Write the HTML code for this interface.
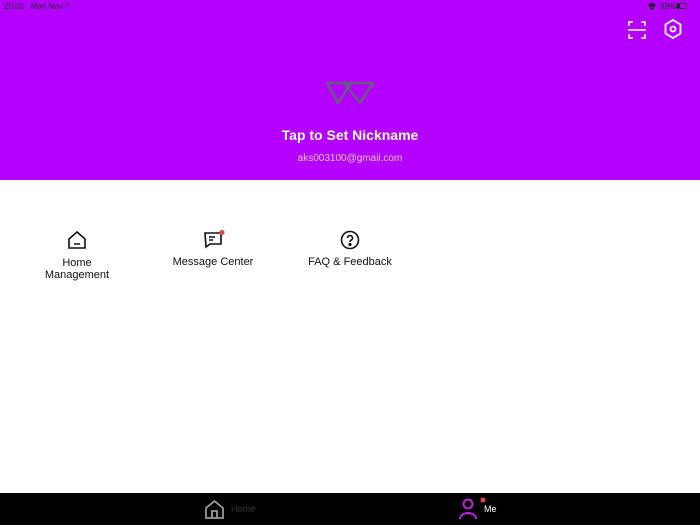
<!DOCTYPE html>
<html><head><style>
*{margin:0;padding:0;box-sizing:border-box}
body{width:700px;height:525px;background:#fff;font-family:"Liberation Sans",sans-serif;position:relative;overflow:hidden}
.hdr{position:absolute;left:0;top:0;width:700px;height:180px;background:#b400fe}
.t{position:absolute;color:#fff}
.item{position:absolute;text-align:center;font-size:11px;color:#111;line-height:12px}
.bar{position:absolute;left:0;top:493px;width:700px;height:32px;background:#000}
</style></head><body>
<div class="hdr">
<div class="t" style="left:4px;top:2px;font-size:8px;color:#222">20:01&nbsp;&nbsp; Mon Nov 7</div>
<div class="t" style="left:660px;top:2px;font-size:8px;color:#222">38%</div>
<div style="position:absolute;left:676px;top:3px;width:11px;height:6px;border:1px solid #333;border-radius:2px"><div style="width:3px;height:4px;background:#222"></div></div>
<svg style="position:absolute;left:647px;top:3px" width="10" height="7" viewBox="0 0 10 7"><path d="M1 2.5Q5 -1 9 2.5M2.5 4Q5 2 7.5 4M5 6.5l1.2-1.3h-2.4z" stroke="#222" fill="#222" stroke-width="1.2"/></svg>
<svg style="position:absolute;left:628px;top:21px" width="18" height="18" viewBox="0 0 18 18" fill="none" stroke="#fff" stroke-width="1.6"><path d="M1 5V1h4M13 1h4v4M17 13v4h-4M5 17H1v-4M0 9h18"/></svg>
<svg style="position:absolute;left:664px;top:19px" width="18" height="20" viewBox="0 0 18 20" fill="none" stroke="#fff" stroke-width="1.8"><path d="M9 1l7.5 4.5v9L9 19 1.5 14.5v-9z"/><circle cx="9" cy="10" r="2.5"/></svg>
<svg style="position:absolute;left:324px;top:80px" width="52" height="26" viewBox="0 0 52 26" fill="none" stroke="#6a5a80" stroke-width="2.6" stroke-linejoin="round"><path d="M3 3h24L14 23z"/><path d="M20 3h29L36 23z"/></svg>
<div class="t" style="left:0;width:700px;text-align:center;top:127px;font-size:14px;font-weight:bold">Tap to Set Nickname</div>
<div class="t" style="left:0;width:700px;text-align:center;top:153px;font-size:10px;color:#e6c0ff">aks003100@gmail.com</div>
</div>
<svg style="position:absolute;left:67px;top:231px" width="20" height="18" viewBox="0 0 20 18" fill="none" stroke="#111" stroke-width="1.6"><path d="M2 8L10 1l8 7v9H2z M7 13h6"/></svg>
<div class="item" style="left:37px;width:80px;top:257px">Home<br>Management</div>
<svg style="position:absolute;left:203px;top:229px" width="24" height="20" viewBox="0 0 24 20" fill="none" stroke="#111" stroke-width="1.6"><path d="M2 4h16v11H7l-4 3z M6 8h6M6 11h4"/><circle cx="19" cy="3.5" r="2.5" fill="#f24040" stroke="none"/></svg>
<div class="item" style="left:163px;width:100px;top:256px">Message Center</div>
<svg style="position:absolute;left:340px;top:230px" width="20" height="20" viewBox="0 0 20 20" fill="none" stroke="#111" stroke-width="1.6"><circle cx="10" cy="10" r="8.5"/><path d="M7.5 8a2.5 2.5 0 1 1 3.5 2.3c-.8.4-1 .9-1 1.7"/><circle cx="10" cy="14.5" r=".8" fill="#111"/></svg>
<div class="item" style="left:300px;width:100px;top:256px">FAQ &amp; Feedback</div>
<div class="bar">
<svg style="position:absolute;left:204px;top:6px" width="21" height="21" viewBox="0 0 21 21" fill="none" stroke="#999" stroke-width="1.8"><path d="M2 9L10.5 2 19 9v10H2z M8 19v-7h5v7"/></svg>
<div style="position:absolute;left:231px;top:11px;font-size:9px;color:#333">Home</div>
<svg style="position:absolute;left:458px;top:4px" width="30" height="24" viewBox="0 0 30 24" fill="none" stroke="#c020e0" stroke-width="2"><circle cx="10" cy="7" r="4.5"/><path d="M2 22a8 6 0 0 1 16 0"/><circle cx="25" cy="3" r="2.5" fill="#f24040" stroke="none"/></svg>
<div style="position:absolute;left:484px;top:11px;font-size:9px;color:#fff">Me</div>
</div>
</body></html>
